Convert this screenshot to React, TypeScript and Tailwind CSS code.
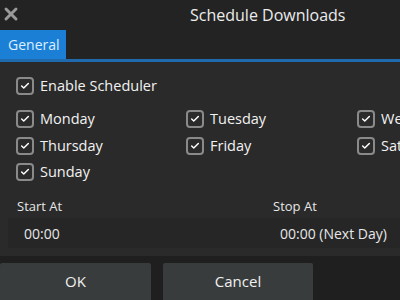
import { Check, X } from "lucide-react";

function Box({ label }: { label: string }) {
  return (
    <div className="flex h-[18px] items-center gap-[6px]">
      <span className="flex h-[18px] w-[18px] shrink-0 items-center justify-center rounded-[4px] border-2 border-[#8a8a8a] bg-[#2b2b2b]">
        <Check className="h-[10px] w-[10px] text-white" strokeWidth={3.5} />
      </span>
      <span className="whitespace-nowrap text-[14.5px] font-medium leading-[18px] text-[#f2f2f2]">{label}</span>
    </div>
  );
}

export default function App() {
  return (
    <div
      className="flex h-[300px] w-[400px] flex-col overflow-hidden bg-[#232323]"
      style={{ fontFamily: '"Open Sans", "DejaVu Sans", sans-serif' }}
    >
      {/* title bar */}
      <div className="relative flex h-[28px] shrink-0 items-center">
        <X className="ml-[1px] h-[20px] w-[20px] text-[#9a9a9a]" strokeWidth={3.5} />
        <span className="absolute left-[190px] top-[3px] whitespace-nowrap text-[16px] font-medium text-[#ececec]">
          Schedule Downloads
        </span>
      </div>

      {/* tabs */}
      <div className="flex h-[31px] shrink-0 items-end">
        <div className="flex h-[29px] w-[66px] items-center bg-[#1b7fd6] pl-[8px] text-[14px] font-medium text-[#dcefff]">
          General
        </div>
      </div>
      <div className="h-[3px] shrink-0 bg-[#1f69ad]" />

      {/* content */}
      <div className="flex h-[194px] shrink-0 flex-col bg-[#2a2a2a] pl-[16px] pt-[15px]">
        <Box label="Enable Scheduler" />
        <div className="mt-[15px] grid grid-cols-[170px_171px_100px] gap-y-[8.5px]">
          <Box label="Monday" />
          <Box label="Tuesday" />
          <Box label="Wednesday" />
          <Box label="Thursday" />
          <Box label="Friday" />
          <Box label="Saturday" />
          <Box label="Sunday" />
        </div>

        <div className="mt-[16px] grid grid-cols-[256px_1fr]">
          <div className="flex flex-col">
            <span className="pl-[1px] text-[13px] font-medium leading-[18px] text-[#e6e6e6]">Start At</span>
            <div className="mt-[3px] ml-[-8px] flex h-[30px] items-center bg-[#262626] pl-[16px] text-[14px] text-[#e6e6e6]">
              00:00
            </div>
          </div>
          <div className="flex flex-col">
            <span className="pl-[1px] text-[13px] font-medium leading-[18px] text-[#e6e6e6]">Stop At</span>
            <div className="mt-[3px] flex h-[30px] items-center bg-[#262626] pl-[8px] text-[14px] text-[#e6e6e6]">
              00:00 (Next Day)
            </div>
          </div>
        </div>
      </div>

      {/* buttons */}
      <div className="flex flex-1 items-start gap-[12px] bg-[#1f1f1f] pt-[7px]">
        <button className="h-[40px] w-[151px] shrink-0 rounded-[2px] bg-[#393c3c] pb-[3px] text-[15px] font-medium text-[#f0f0f0]">
          OK
        </button>
        <button className="h-[40px] w-[150px] shrink-0 rounded-[2px] bg-[#393c3c] pb-[3px] text-[15px] font-medium text-[#f0f0f0]">
          Cancel
        </button>
      </div>
    </div>
  );
}
